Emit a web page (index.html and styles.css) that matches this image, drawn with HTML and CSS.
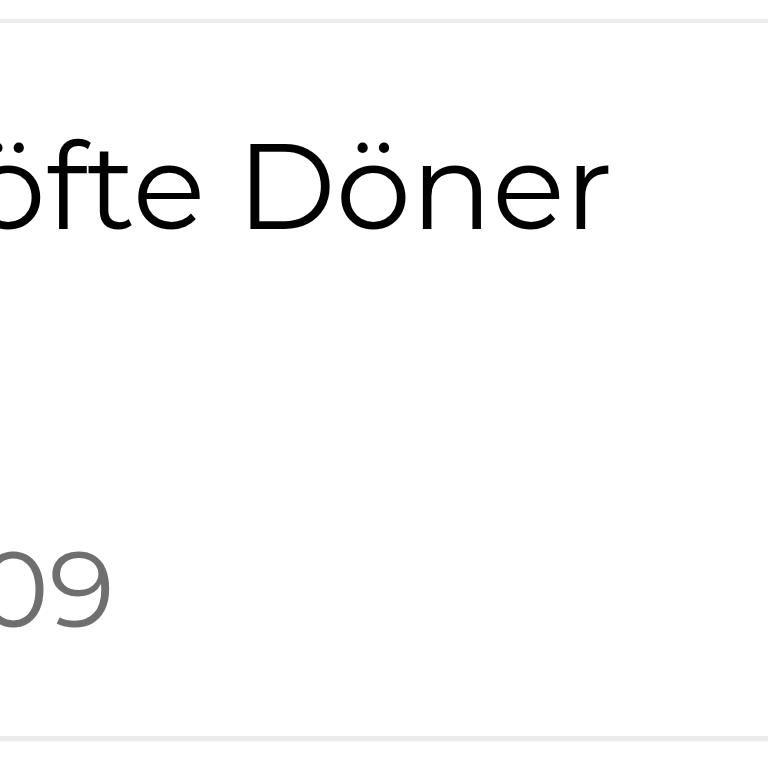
FILE: index.html
```html
<!DOCTYPE html>
<html lang="de">
<head>
<meta charset="utf-8">
<title>Köfte Döner</title>
<link rel="stylesheet" href="styles.css">
</head>
<body>
<div class="page">
  <article class="card">
    <h2 class="card-title">Köfte Döner</h2>
    <p class="card-price">€ 8,09</p>
  </article>
</div>
</body>
</html>
```
FILE: styles.css
```css
html, body {
  margin: 0;
  padding: 0;
  background: #ffffff;
}
.page {
  width: 768px;
  height: 768px;
  overflow: hidden;
  padding-top: 19px;
  box-sizing: border-box;
}
.card {
  background: #ffffff;
  border-top: 4px solid #ececec;
  border-bottom: 5px solid #ececec;
  box-shadow: 0 0 3px rgba(0, 0, 0, 0.05);
  padding: 103px 0 94px 0;
  display: flex;
  flex-direction: column;
  gap: 288px;
  font-family: Montserrat, "DejaVu Sans", "Noto Sans", sans-serif;
}
.card-title {
  margin: 0 0 0 -112px;
  font-size: 120px;
  line-height: 120px;
  font-weight: 400;
  color: #000000;
  white-space: nowrap;
}
.card-price {
  margin: 0 0 0 -228px;
  font-size: 108px;
  line-height: 108px;
  color: #6f6f6f;
  white-space: nowrap;
}
```
